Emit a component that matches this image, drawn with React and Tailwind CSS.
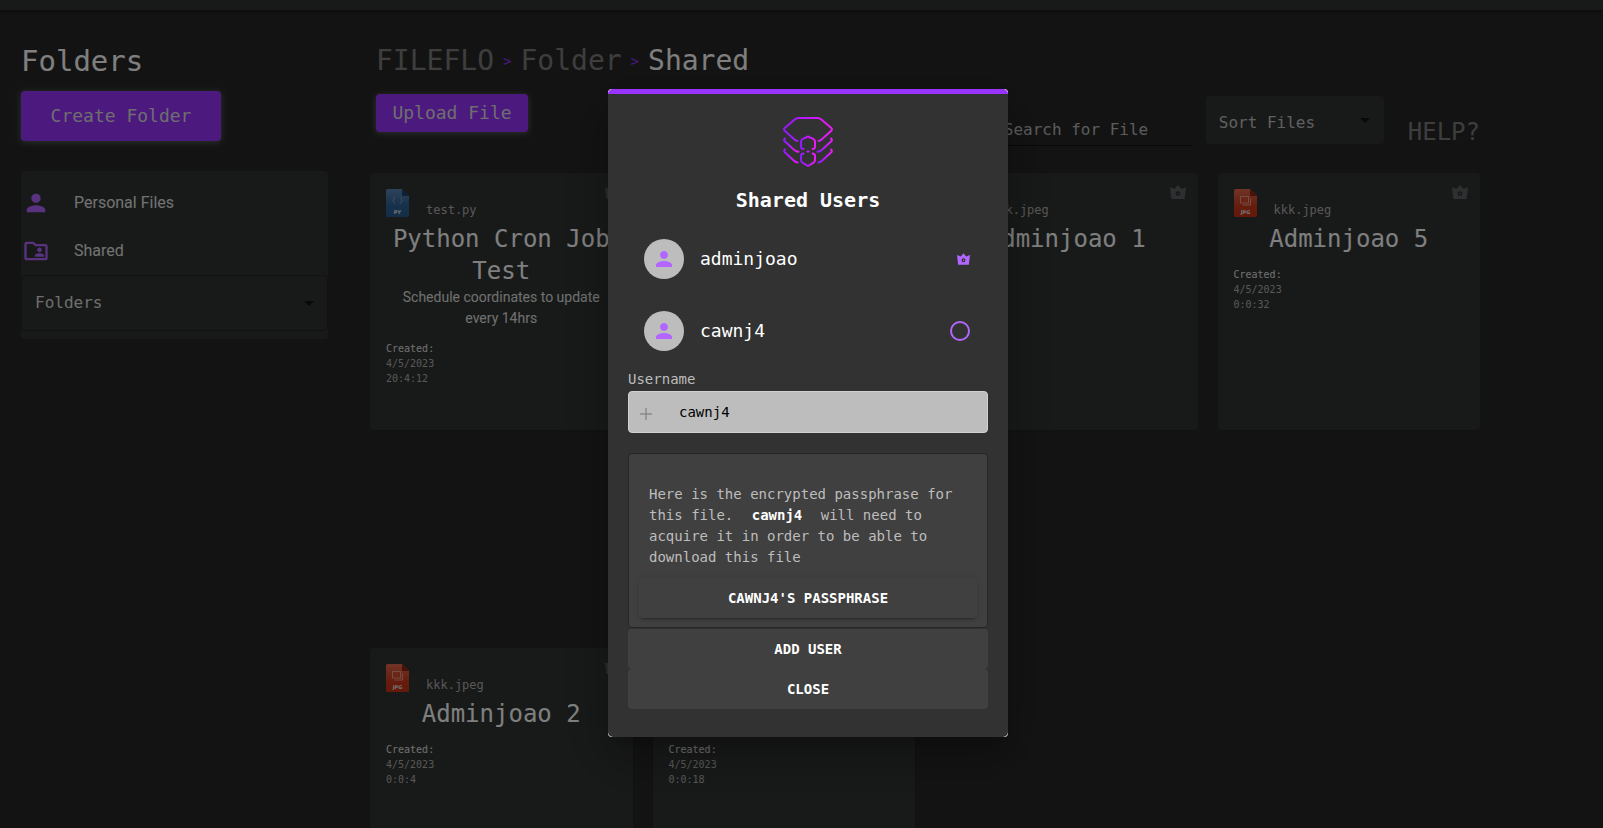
import React from "react";

const MONO = "font-['DejaVu_Sans_Mono',monospace]";

function PersonIcon({ className }) {
  return (
    <svg viewBox="0 0 24 24" className={className} fill="currentColor" aria-hidden="true">
      <path d="M12 12c2.21 0 4-1.79 4-4s-1.79-4-4-4-4 1.79-4 4 1.79 4 4 4zm0 2c-2.67 0-8 1.34-8 4v2h16v-2c0-2.66-5.33-4-8-4z" />
    </svg>
  );
}

function FolderSharedIcon({ className }) {
  return (
    <svg viewBox="0 0 24 24" className={className} fill="currentColor" aria-hidden="true">
      <path d="M20 6h-8l-2-2H4c-1.1 0-1.99.9-1.99 2L2 18c0 1.1.9 2 2 2h16c1.1 0 2-.9 2-2V8c0-1.1-.9-2-2-2zm0 12H4V6h5.17l2 2H20v10zm-5-5c1.1 0 2-.9 2-2s-.9-2-2-2-2 .9-2 2 .9 2 2 2zm-4 4h8v-1c0-1.33-2.67-2-4-2s-4 .67-4 2v1z" />
    </svg>
  );
}

function CaretIcon({ className }) {
  return (
    <svg viewBox="0 0 10 5" className={className} fill="currentColor" aria-hidden="true">
      <path d="M0 0h10L5 5z" />
    </svg>
  );
}

function CrownIcon({ className }) {
  return (
    <svg viewBox="0 0 16 14" className={className} fill="currentColor" aria-hidden="true">
      <path
        fillRule="evenodd"
        d="M0 2.2 4.6 4 8 0l3.4 4L16 2.2 14.6 14H1.4zM8 6.2a2.4 2.4 0 1 0 0 4.8 2.4 2.4 0 0 0 0-4.8zm0 1.5a.9.9 0 1 1 0 1.8.9.9 0 0 1 0-1.8z"
      />
    </svg>
  );
}

function FileIcon({ kind }) {
  const py = kind === "PY";
  return (
    <svg viewBox="0 0 23 28" className="h-7 w-[23px]" role="img" aria-label={kind}>
      <defs>
        <linearGradient id={"file" + kind} x1="0" y1="0" x2="0" y2="1">
          <stop offset="0" stopColor={py ? "#5b86b4" : "#e0694d"} />
          <stop offset="0.6" stopColor={py ? "#2c6296" : "#cc3a1c"} />
          <stop offset="1" stopColor={py ? "#285c90" : "#c83216"} />
        </linearGradient>
      </defs>
      <path d="M1.5 0H16l7 7v19.500a1.500 1.500 0 0 1-1.500 1.500h-20A1.500 1.500 0 0 1 0 26.500v-25A1.500 1.500 0 0 1 1.500 0z" fill={"url(#file" + kind + ")"} />
      <path d="M16 0l7 7h-5.500A1.500 1.500 0 0 1 16 5.500z" fill={py ? "#1c4268" : "#8c2410"} />
      {py ? (
        <path d="M9.200 8c-1.200 0-1.500.5-1.500 1.300v1c0 .7-.4 1-1 1 .6 0 1 .3 1 1v1c0 .8.3 1.300 1.500 1.300M13.800 8c1.200 0 1.500.5 1.500 1.300v1c0 .7.4 1 1 1-.6 0-1 .3-1 1v1c0 .8-.3 1.300-1.500 1.300" fill="none" stroke="#7f9cbc" strokeWidth="1" />
      ) : (
        <g fill="none" stroke="#e89a86" strokeWidth="1">
          <rect x="6.500" y="7.500" width="8" height="6.500" />
          <path d="M16.500 9.500V16h-8" />
        </g>
      )}
      <text x="11.500" y="25" textAnchor="middle" fontSize="5" fontWeight="700" fontFamily="DejaVu Sans" fill="#e8e8e8">
        {kind}
      </text>
    </svg>
  );
}

function Logo() {
  return (
    <svg viewBox="0 0 50 50" className="h-[50px] w-[50px]" fill="none" strokeWidth="2" strokeLinecap="round" strokeLinejoin="round" role="img" aria-label="FileFlo">
      <defs>
        <linearGradient id="wide" gradientUnits="userSpaceOnUse" x1="0" y1="0" x2="50" y2="0">
          <stop offset="0" stopColor="#8c1aff" />
          <stop offset="1" stopColor="#f01af5" />
        </linearGradient>
        <linearGradient id="left" gradientUnits="userSpaceOnUse" x1="0" y1="0" x2="16" y2="0">
          <stop offset="0" stopColor="#8c1aff" />
          <stop offset="1" stopColor="#f01af5" />
        </linearGradient>
        <linearGradient id="right" gradientUnits="userSpaceOnUse" x1="34" y1="0" x2="50" y2="0">
          <stop offset="0" stopColor="#8c1aff" />
          <stop offset="1" stopColor="#f01af5" />
        </linearGradient>
        <linearGradient id="core" gradientUnits="userSpaceOnUse" x1="17" y1="0" x2="33" y2="0">
          <stop offset="0" stopColor="#8c1aff" />
          <stop offset="1" stopColor="#f01af5" />
        </linearGradient>
      </defs>
      <path stroke="url(#wide)" d="M14.500 24C12 23.500 11 22 9 20.300L2 14c-1.300-1.200-1.300-2.200 0-3.300L12 2.300C13.200 1.300 14 1 15.500 1h19c1.500 0 2.300.3 3.500 1.300l10 8.400c1.300 1.100 1.300 2.100 0 3.300l-7 6.300c-2 1.700-3 3.200-5.500 3.700" />
      <path stroke="url(#left)" d="M2 21.500c-1.200 1-1.200 2 0 3l9 8.200c1.500 1.300 2.500 2 4.500 2.100M2 32.500c-1.200 1-1.200 2 0 3l9 8.200c1.300 1.100 2 1.700 3.500 1.800" />
      <path stroke="url(#right)" d="M48 21.500c1.200 1 1.200 2 0 3l-9 8.200c-1.500 1.300-2.500 2-4.500 2.100M48 32.500c1.200 1 1.200 2 0 3l-9 8.200c-1.300 1.100-2 1.700-3.500 1.800" />
      <path stroke="url(#core)" d="M20.500 32c-1.500 0-2.500-1-2.500-2.500v-5c0-1.500.6-2 1.800-2.700L25 19.500l5.200 2.300c1.200.7 1.800 1.200 1.800 2.700v5c0 1.500-1 2.500-2.500 2.500M20.500 36.500c-1.700.2-2.500.8-2.500 2.500v4c0 1.500.6 2.200 1.800 2.900L25 49l5.200-3.100c1.200-.7 1.800-1.400 1.800-2.900v-4c0-1.700-.8-2.300-2.500-2.500M24.300 34.500h1.400" />
    </svg>
  );
}

function FileCard({ kind, file, title, note, date, time }) {
  return (
    <article className="relative h-[257px] rounded bg-[#303432] p-4 shadow-sm">
      <div className="flex h-[28px] gap-[17px]">
        <FileIcon kind={kind} />
        <span className="pt-[13px] text-xs text-[#b0b0b0]">{file}</span>
      </div>
      <CrownIcon className="absolute top-3 right-3 h-[14px] w-4 text-[#5c5e62]" />
      <h2 className="-mx-2 mt-[6px] text-center text-2xl leading-8 text-white">{title}</h2>
      {note && (
        <p className="text-center font-[Roboto,sans-serif] text-sm leading-[21px] text-[#e0e0e0]">{note}</p>
      )}
      <dl className="mt-3 text-[10px] leading-[15px]">
        <dt className="text-[#e0e0e0]">Created:</dt>
        <dd className="text-[#b0b0b0]">{date}</dd>
        <dd className="text-[#b0b0b0]">{time}</dd>
      </dl>
    </article>
  );
}

const files = [
  { kind: "PY", file: "test.py", title: "Python Cron Job Test", note: "Schedule coordinates to update every 14hrs", date: "4/5/2023", time: "20:4:12" },
  { kind: "JPG", file: "kkk.jpeg", title: "Adminjoao 4", date: "4/5/2023", time: "0:0:25" },
  { kind: "JPG", file: "kkk.jpeg", title: "Adminjoao 1", date: "4/5/2023", time: "0:0:11" },
  { kind: "JPG", file: "kkk.jpeg", title: "Adminjoao 5", date: "4/5/2023", time: "0:0:32" },
  { kind: "JPG", file: "kkk.jpeg", title: "Adminjoao 2", date: "4/5/2023", time: "0:0:4" },
  { kind: "JPG", file: "kkk.jpeg", title: "Adminjoao 3", date: "4/5/2023", time: "0:0:18" },
];

function Sidebar() {
  return (
    <aside className="w-[307px] shrink-0 pt-[33px]">
      <h1 className="text-[29px] leading-9 text-white">Folders</h1>
      <button className="mt-3 h-[50px] w-[200px] rounded bg-[#9933ff] text-lg text-[#dddddd] shadow-[0_1px_6px_#5a6a5e]">
        Create Folder
      </button>
      <nav className="mt-[30px] rounded bg-[#303432] pt-2 pb-2 font-[Roboto,sans-serif] text-[#e4e4e4]">
        <a href="#personal" className="flex h-12 items-center gap-6 pl-px">
          <PersonIcon className="h-7 w-7 text-[#b266ff]" />
          Personal Files
        </a>
        <a href="#shared" className="flex h-12 items-center gap-6 pl-px">
          <FolderSharedIcon className="h-7 w-7 text-[#b266ff]" />
          Shared
        </a>
        <div className={"relative flex h-[56px] rounded border border-[#222423] " + MONO}>
          <select aria-label="Folders" className="w-full appearance-none bg-transparent px-[13px] text-[#dddddd]">
            <option>Folders</option>
          </select>
          <CaretIcon className="pointer-events-none absolute top-[25px] right-[13px] h-[5px] w-[10px] text-[#111111]" />
        </div>
      </nav>
    </aside>
  );
}

function Toolbar() {
  return (
    <div className="flex items-start pl-1.5">
      <button className="h-[38px] w-[152px] rounded bg-[#9933ff] text-lg text-[#dddddd] shadow-[0_1px_6px_#5a6a5e]">
        Upload File
      </button>
      <input
        type="search"
        aria-label="Search for File"
        placeholder="Search for File"
        className="mt-[18px] ml-auto h-[34px] w-[188px] border-b border-[#111111] bg-transparent pt-0.5 text-base text-white placeholder:text-[#b8b8b8]"
      />
      <div className="relative mt-[2px] ml-[14px] h-12 w-[178px] rounded bg-[#303432]">
        <select aria-label="Sort Files" className="h-full w-full appearance-none bg-transparent px-[13px] pt-1.5 text-[#c0c0c0]">
          <option>Sort Files</option>
        </select>
        <CaretIcon className="pointer-events-none absolute top-[22px] right-[14px] h-[5px] w-[10px] text-[#111111]" />
      </div>
      <a href="#help" className="mt-[22px] ml-6 text-2xl leading-8 text-[#7c7c7c]">HELP?</a>
    </div>
  );
}

function UserRow({ name, children }) {
  return (
    <li className="flex h-[72px] items-center pr-[18px] pl-4">
      <span className="flex h-10 w-10 items-center justify-center rounded-full bg-[#bdbdbd]">
        <PersonIcon className="h-6 w-6 text-[#b266ff]" />
      </span>
      <span className="ml-4 flex-1 text-lg text-white">{name}</span>
      {children}
    </li>
  );
}

function ShareDialog() {
  const action = "block h-10 w-full rounded bg-[#404040] text-sm font-bold text-white";
  return (
    <div className="fixed inset-0 flex items-center justify-center overflow-auto bg-black/50 pb-0.5 pl-[13px]">
      <div role="dialog" aria-modal="true" aria-labelledby="share-title" className="w-[400px] rounded bg-white shadow-[0_11px_15px_-7px_rgba(0,0,0,0.2),0_24px_38px_3px_rgba(0,0,0,0.14),0_9px_46px_8px_rgba(0,0,0,0.12)]">
        <div className="rounded-[5px] border-t-[5px] border-[#9933ff] bg-[#323232] px-5 pt-[23px] pb-7">
          <div className="flex justify-center">
            <Logo />
          </div>
          <h2 id="share-title" className="mt-[19px] text-center text-xl leading-7 font-bold text-white">Shared Users</h2>
          <ul className="mt-[9px]">
            <UserRow name="adminjoao">
              <CrownIcon className="h-3 w-[13px] text-[#b266ff]" />
            </UserRow>
            <UserRow name="cawnj4">
              <button aria-label="Remove cawnj4" className="h-5 w-5 rounded-full border-2 border-[#b266ff]" />
            </UserRow>
          </ul>
          <label htmlFor="username" className="block text-sm leading-6 text-[#bdbdbd]">Username</label>
          <div className="flex h-[42px] items-center rounded border border-[#d0d0d0] bg-[#bdbdbd] px-[11px]">
            <svg viewBox="0 0 12 12" className="mt-1 h-3 w-3 text-[#8a8a8a]" stroke="currentColor" strokeWidth="1.500" aria-hidden="true">
              <path d="M6 0v12M0 6h12" />
            </svg>
            <input id="username" defaultValue="cawnj4" className="ml-[27px] min-w-0 flex-1 bg-transparent text-sm text-black outline-none" />
          </div>
          <div className="mt-5 mb-px rounded border border-[#262626] bg-[#404040] px-[10px] pt-[30px] pb-[9px]">
            <p className="px-[10px] text-sm leading-[21px] text-[#bdbdbd]">
              Here is the encrypted passphrase for this file. <strong className="mx-[10px] text-white">cawnj4</strong> will need to acquire it in order to be able to download this file
            </p>
            <button className="mt-[10px] h-10 w-full rounded bg-[#404040] text-sm font-bold text-white shadow-[0_3px_3px_-2px_rgba(0,0,0,0.3),0_1px_6px_rgba(0,0,0,0.15)]">
              CAWNJ4'S PASSPHRASE
            </button>
          </div>
          <button className={action}>ADD USER</button>
          <button className={action}>CLOSE</button>
        </div>
      </div>
    </div>
  );
}

export default function App() {
  return (
    <div className={"h-screen overflow-hidden bg-[#272727] " + MONO}>
      <header className="h-[10px] bg-[#303432] shadow-[0_2px_4px_rgba(0,0,0,0.4)]" />
      <div className="flex gap-[42px] pr-[123px] pl-[21px]">
        <Sidebar />
        <main className="min-w-0 flex-1 pt-[33px]">
          <nav className="mb-[15px] flex items-center gap-[9px] pl-1.5 text-[28px] leading-9 text-[#7c7c7c]">
            <a href="#home">FILEFLO</a>
            <span className="text-sm text-[#9933ff]">&gt;</span>
            <a href="#folder">Folder</a>
            <span className="text-sm text-[#9933ff]">&gt;</span>
            <span className="text-white">Shared</span>
          </nav>
          <Toolbar />
          <div className="mt-[25px] grid grid-cols-4 gap-x-5 gap-y-[218px]">
            {files.map((f) => (
              <FileCard key={f.title} {...f} />
            ))}
          </div>
        </main>
      </div>
      <ShareDialog />
    </div>
  );
}
